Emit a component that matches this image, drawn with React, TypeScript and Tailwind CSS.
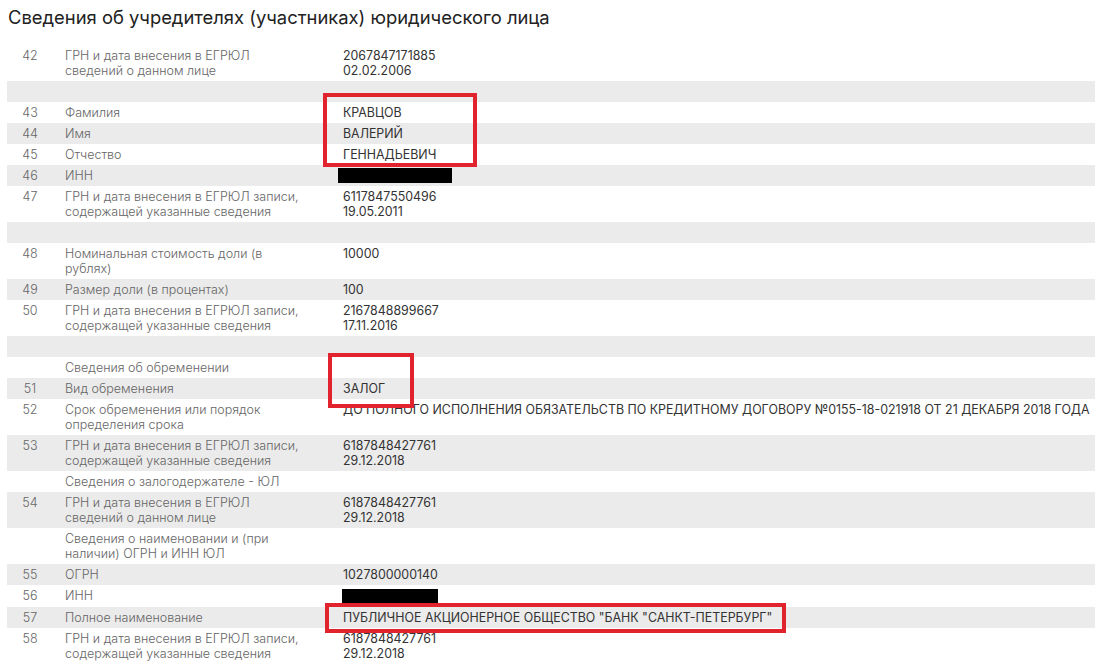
import React from 'react';

type Row = {
  num?: string;
  label?: string[];
  value?: string[];
  redact?: 'a' | 'b';
};

const rows: Row[] = [
  { num: '42', label: ['ГРН и дата внесения в ЕГРЮЛ', 'сведений о данном лице'], value: ['2067847171885', '02.02.2006'] },
  {},
  { num: '43', label: ['Фамилия'], value: ['КРАВЦОВ'] },
  { num: '44', label: ['Имя'], value: ['ВАЛЕРИЙ'] },
  { num: '45', label: ['Отчество'], value: ['ГЕННАДЬЕВИЧ'] },
  { num: '46', label: ['ИНН'], redact: 'a' },
  { num: '47', label: ['ГРН и дата внесения в ЕГРЮЛ записи,', 'содержащей указанные сведения'], value: ['6117847550496', '19.05.2011'] },
  {},
  { num: '48', label: ['Номинальная стоимость доли (в', 'рублях)'], value: ['10000'] },
  { num: '49', label: ['Размер доли (в процентах)'], value: ['100'] },
  { num: '50', label: ['ГРН и дата внесения в ЕГРЮЛ записи,', 'содержащей указанные сведения'], value: ['2167848899667', '17.11.2016'] },
  {},
  { label: ['Сведения об обременении'] },
  { num: '51', label: ['Вид обременения'], value: ['ЗАЛОГ'] },
  {
    num: '52',
    label: ['Срок обременения или порядок', 'определения срока'],
    value: ['ДО ПОЛНОГО ИСПОЛНЕНИЯ ОБЯЗАТЕЛЬСТВ ПО КРЕДИТНОМУ ДОГОВОРУ №0155-18-021918 ОТ 21 ДЕКАБРЯ 2018 ГОДА'],
  },
  { num: '53', label: ['ГРН и дата внесения в ЕГРЮЛ записи,', 'содержащей указанные сведения'], value: ['6187848427761', '29.12.2018'] },
  { label: ['Сведения о залогодержателе - ЮЛ'] },
  { num: '54', label: ['ГРН и дата внесения в ЕГРЮЛ', 'сведений о данном лице'], value: ['6187848427761', '29.12.2018'] },
  { label: ['Сведения о наименовании и (при', 'наличии) ОГРН и ИНН ЮЛ'] },
  { num: '55', label: ['ОГРН'], value: ['1027800000140'] },
  { num: '56', label: ['ИНН'], redact: 'b' },
  { num: '57', label: ['Полное наименование'], value: ['ПУБЛИЧНОЕ АКЦИОНЕРНОЕ ОБЩЕСТВО "БАНК "САНКТ-ПЕТЕРБУРГ"'] },
  { num: '58', label: ['ГРН и дата внесения в ЕГРЮЛ записи,', 'содержащей указанные сведения'], value: ['6187848427761', '29.12.2018'] },
];

export default function App() {
  return (
    <div
      className="relative w-[1095px] h-[663px] overflow-hidden bg-white"
      style={{ fontFamily: 'Inter, "Noto Sans", sans-serif' }}
    >
      <h1 className="h-[45px] pl-[8px] pt-[5px] text-[18.4px] leading-[24px] text-[#222]">
        Сведения об учредителях (участниках) юридического лица
      </h1>

      <div className="ml-[7px]">
        {rows.map((row, i) => (
          <div
            key={i}
            className={`flex py-[3px] text-[12.5px] leading-[15px] ${i % 2 === 1 ? 'bg-[#ebebeb]' : 'bg-white'} ${!row.label ? 'h-[21px]' : ''}`}
          >
            <div className="w-[46px] text-center text-[#666] font-light">{row.num}</div>
            <div className="w-[290px] pl-[12px] text-[#666] font-light">
              {row.label?.map((l, j) => (
                <div key={j}>{l}</div>
              ))}
            </div>
            <div className="flex-1 text-[12.4px] text-[#333] whitespace-nowrap">
              {row.value?.map((v, j) => (
                <div key={j}>{v}</div>
              ))}
              {row.redact === 'a' && <div className="-ml-[5px] h-[15px] w-[114px] bg-black" />}
              {row.redact === 'b' && <div className="-ml-[1px] mt-[1px] h-[15px] w-[96px] bg-black" />}
            </div>
          </div>
        ))}
      </div>

      {/* highlight frames */}
      <div className="absolute left-[323px] top-[93px] w-[154px] h-[74px] border-4 border-[#e0232c]" />
      <div className="absolute left-[328px] top-[353px] w-[86px] h-[55px] border-4 border-[#e0232c]" />
      <div className="absolute left-[325px] top-[603px] w-[461px] h-[30px] border-4 border-[#e0232c]" />
    </div>
  );
}
